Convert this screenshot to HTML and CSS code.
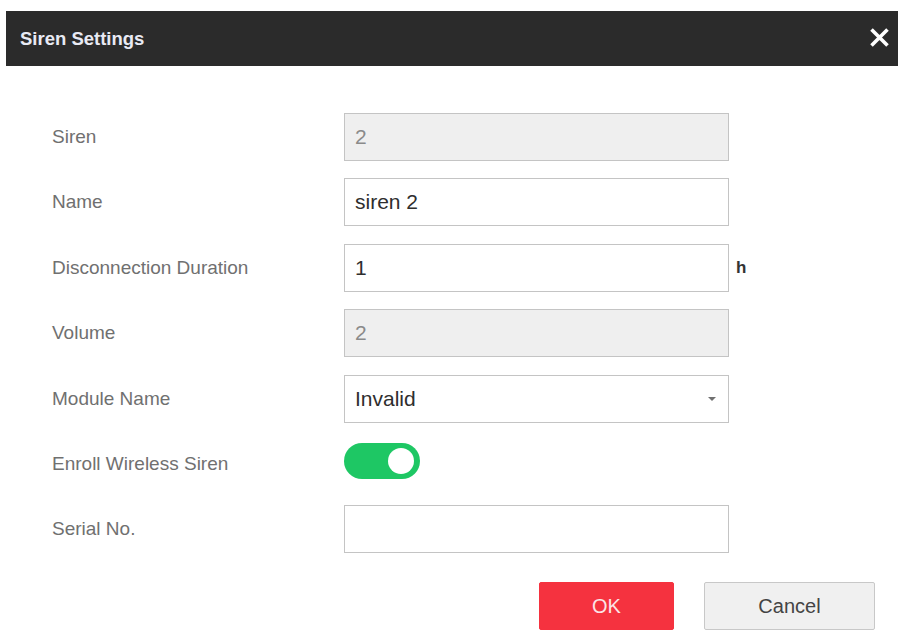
FILE: index.html
```html
<!DOCTYPE html>
<html lang="en">

<head>
    <meta charset="UTF-8">
    <meta name="viewport" content="width=device-width, initial-scale=1.0">
    <title>Siren Settings</title>
    <link rel="stylesheet" href="styles.css">
</head>

<body>
    <div class="dialog">
        <div class="dialog-header">
            <span class="dialog-title">Siren Settings</span>
            <button class="close-btn" title="Close">
                <svg width="21" height="19" viewBox="0 0 21 19">
                    <path d="M2.5 1.5 L18.5 17.5 M18.5 1.5 L2.5 17.5" stroke="#fff" stroke-width="3.6" fill="none" />
                </svg>
            </button>
        </div>

        <div class="dialog-body">
            <label class="label">Siren</label>
            <input class="field" type="text" value="2" disabled>
            <span></span>

            <label class="label">Name</label>
            <input class="field" type="text" value="siren 2">
            <span></span>

            <label class="label">Disconnection Duration</label>
            <input class="field" type="text" value="1">
            <span class="unit">h</span>

            <label class="label">Volume</label>
            <input class="field" type="text" value="2" disabled>
            <span></span>

            <label class="label">Module Name</label>
            <div class="field select">
                <span>Invalid</span>
                <span class="caret"></span>
            </div>
            <span></span>

            <label class="label">Enroll Wireless Siren</label>
            <div class="switch-cell">
                <div class="switch on">
                    <span class="knob"></span>
                </div>
            </div>
            <span></span>

            <label class="label">Serial No.</label>
            <input class="field" type="text" value="">
            <span></span>
        </div>

        <div class="dialog-footer">
            <button class="btn btn-ok">OK</button>
            <button class="btn btn-cancel">Cancel</button>
        </div>
    </div>
</body>

</html>
```

FILE: styles.css
```css
body {
    margin: 0;
    background-color: white;
    font-family: "Liberation Sans", Arial, sans-serif;
}

.dialog {
    margin: 11px 8px 0 6px;
}

.dialog-header {
    height: 55px;
    background-color: #2b2b2b;
    display: flex;
    align-items: center;
    justify-content: space-between;
    padding: 0 8px 0 14px;
}

.dialog-title {
    color: #e8eaf4;
    font-size: 18.5px;
    font-weight: bold;
}

.close-btn {
    background: none;
    border: none;
    padding: 0;
    display: flex;
    margin-top: -2px;
    cursor: pointer;
}

.dialog-body {
    display: grid;
    grid-template-columns: 292px 385px auto;
    grid-auto-rows: 48px;
    row-gap: 17.4px;
    align-items: center;
    padding: 47px 0 0 46px;
}

.label {
    color: #707070;
    font-size: 19px;
}

.field {
    box-sizing: border-box;
    width: 385px;
    height: 48px;
    margin: 0;
    border: 1px solid #c4c4c4;
    background-color: white;
    padding: 0 10px;
    font-family: "Liberation Sans", Arial, sans-serif;
    font-size: 21px;
    color: #2e2e2e;
    outline: none;
}

.field:disabled {
    background-color: #efefef;
    color: #8a8a8a;
    -webkit-text-fill-color: #8a8a8a;
}

.select {
    display: flex;
    align-items: center;
    justify-content: space-between;
    padding-right: 12px;
}

.caret {
    width: 0;
    height: 0;
    border-left: 4px solid transparent;
    border-right: 4px solid transparent;
    border-top: 4px solid #707070;
}

.unit {
    margin-left: 7px;
    color: #333;
    font-size: 17px;
    font-weight: bold;
}

.switch-cell {
    display: flex;
    align-items: center;
    margin-top: -6px;
}

.switch {
    box-sizing: border-box;
    width: 76px;
    height: 36px;
    border-radius: 18px;
    background-color: #1ec764;
    display: flex;
    align-items: center;
    justify-content: flex-end;
    padding: 0 6px;
}

.knob {
    width: 26px;
    height: 26px;
    border-radius: 50%;
    background-color: white;
}

.dialog-footer {
    display: flex;
    justify-content: flex-end;
    gap: 30px;
    margin-top: 29px;
    padding-right: 23px;
}

.btn {
    height: 48px;
    font-family: "Liberation Sans", Arial, sans-serif;
    font-size: 20px;
    border-radius: 2px;
    cursor: pointer;
}

.btn-ok {
    width: 135px;
    background-color: #f5323f;
    border: 1px solid #f5323f;
    color: #fbe4e6;
}

.btn-cancel {
    width: 171px;
    background-color: #f0f0f0;
    border: 1px solid #c8c8c8;
    color: #444;
}
```
